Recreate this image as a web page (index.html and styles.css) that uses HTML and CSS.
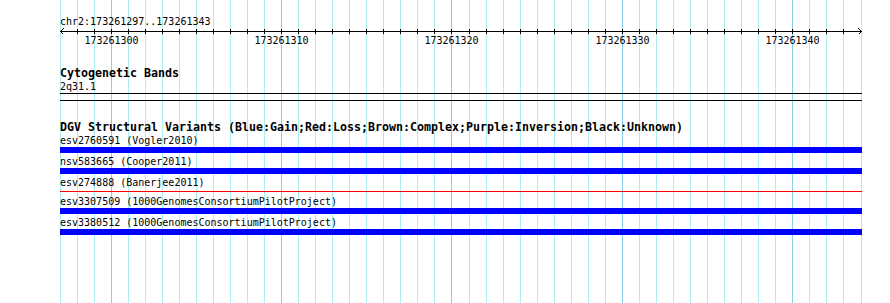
FILE: index.html
```html
<!DOCTYPE html>
<html lang="en">
<head>
    <meta charset="UTF-8">
    <title>chr2:173261297..173261343</title>
    <link rel="stylesheet" href="styles.css">
</head>
<body>
    <div class="panel">
        <!-- grid behind the tracks, one line per base -->
        <svg class="grid" width="890" height="303" viewBox="0 0 890 303">
            <path class="grid-minor" d="M60.5 0V303M77.5 0V303M94.5 0V303M128.5 0V303M145.5 0V303M162.5 0V303M179.5 0V303M196.5 0V303M213.5 0V303M230.5 0V303M247.5 0V303M264.5 0V303M298.5 0V303M315.5 0V303M332.5 0V303M349.5 0V303M366.5 0V303M383.5 0V303M400.5 0V303M417.5 0V303M434.5 0V303M469.5 0V303M486.5 0V303M503.5 0V303M520.5 0V303M537.5 0V303M554.5 0V303M571.5 0V303M588.5 0V303M605.5 0V303M639.5 0V303M656.5 0V303M673.5 0V303M690.5 0V303M707.5 0V303M724.5 0V303M741.5 0V303M758.5 0V303M775.5 0V303M809.5 0V303M826.5 0V303M843.5 0V303M861.5 0V303"/>
            <path class="grid-major" d="M111.5 0V303M281.5 0V303M451.5 0V303M622.5 0V303M792.5 0V303"/>
        </svg>

        <div class="tracks">
            <div class="locus">chr2:173261297..173261343</div>

            <svg class="ruler" width="802" height="19" viewBox="0 0 802 19">
                <path class="ruler-line" d="M0 3.5H802"/>
                <polyline class="ruler-line" points="3.5,0.5 0.5,3.5 3.5,6.5"/>
                <polyline class="ruler-line" points="798.5,0.5 801.5,3.5 798.5,6.5"/>
                <path class="ruler-line" d="M17.5 1V6M34.5 1V6M51.5 1V6M68.5 1V6M85.5 1V6M102.5 1V6M119.5 1V6M136.5 1V6M153.5 1V6M170.5 1V6M187.5 1V6M204.5 1V6M221.5 1V6M238.5 1V6M255.5 1V6M272.5 1V6M289.5 1V6M306.5 1V6M323.5 1V6M340.5 1V6M357.5 1V6M374.5 1V6M391.5 1V6M409.5 1V6M426.5 1V6M443.5 1V6M460.5 1V6M477.5 1V6M494.5 1V6M511.5 1V6M528.5 1V6M545.5 1V6M562.5 1V6M579.5 1V6M596.5 1V6M613.5 1V6M630.5 1V6M647.5 1V6M664.5 1V6M681.5 1V6M698.5 1V6M715.5 1V6M732.5 1V6M749.5 1V6M766.5 1V6M783.5 1V6"/>
                <text class="ruler-label" x="51.5" y="16">173261300</text>
                <text class="ruler-label" x="221.5" y="16">173261310</text>
                <text class="ruler-label" x="391.5" y="16">173261320</text>
                <text class="ruler-label" x="562.5" y="16">173261330</text>
                <text class="ruler-label" x="732.5" y="16">173261340</text>
            </svg>

            <section class="track cyto">
                <div class="track-title">Cytogenetic Bands</div>
                <div class="label">2q31.1</div>
                <div class="band"></div>
            </section>

            <section class="track dgv">
                <div class="track-title">DGV Structural Variants (Blue:Gain;Red:Loss;Brown:Complex;Purple:Inversion;Black:Unknown)</div>
                <div class="feature">
                    <div class="label">esv2760591 (Vogler2010)</div>
                    <div class="bar gain"></div>
                </div>
                <div class="feature">
                    <div class="label">nsv583665 (Cooper2011)</div>
                    <div class="bar gain"></div>
                </div>
                <div class="feature">
                    <div class="label">esv274888 (Banerjee2011)</div>
                    <div class="bar loss"></div>
                </div>
                <div class="feature">
                    <div class="label">esv3307509 (1000GenomesConsortiumPilotProject)</div>
                    <div class="bar gain"></div>
                </div>
                <div class="feature">
                    <div class="label">esv3380512 (1000GenomesConsortiumPilotProject)</div>
                    <div class="bar gain"></div>
                </div>
            </section>
        </div>
    </div>
</body>
</html>
```

FILE: styles.css
```css
* {
    margin: 0;
    padding: 0;
    box-sizing: border-box;
}

body {
    background: #fff;
    color: #000;
    font-family: "DejaVu Sans Mono", "Liberation Mono", monospace;
    font-size: 10px;
    line-height: 13px;
}

.panel {
    position: relative;
    width: 890px;
    height: 303px;
    overflow: hidden;
}

/* grid */
.grid {
    position: absolute;
    top: 0;
    left: 0;
    shape-rendering: crispEdges;
}

.grid-minor {
    stroke: #afeeee;
    stroke-width: 1;
    fill: none;
}

.grid-major {
    stroke: #87ceeb;
    stroke-width: 1;
    fill: none;
}

.tracks {
    position: relative;
    width: 862px;
    padding: 15px 0 0 60px;
}

.locus {
    height: 13px;
    white-space: nowrap;
}

/* ruler */
.ruler {
    display: block;
    shape-rendering: crispEdges;
}

.ruler-line {
    stroke: #000;
    stroke-width: 1;
    fill: none;
}

.ruler-label {
    font-family: "DejaVu Sans Mono", "Liberation Mono", monospace;
    font-size: 10px;
    text-anchor: middle;
    fill: #000;
}

/* tracks */
.track-title {
    font-size: 11.63px;
    font-weight: bold;
    height: 13px;
    white-space: nowrap;
}

.label {
    height: 13px;
    white-space: nowrap;
}

.cyto {
    margin-top: 20px;
}

.band {
    height: 8px;
    border-top: 1px solid #000;
    border-bottom: 1px solid #000;
}

.dgv {
    margin-top: 20px;
}

.feature {
    margin-bottom: 2px;
}

.bar {
    height: 6px;
}

.bar.gain {
    background: #0000ff;
}

.bar.loss {
    height: 1px;
    margin: 2px 0 3px;
    background: #ff0000;
}
```
